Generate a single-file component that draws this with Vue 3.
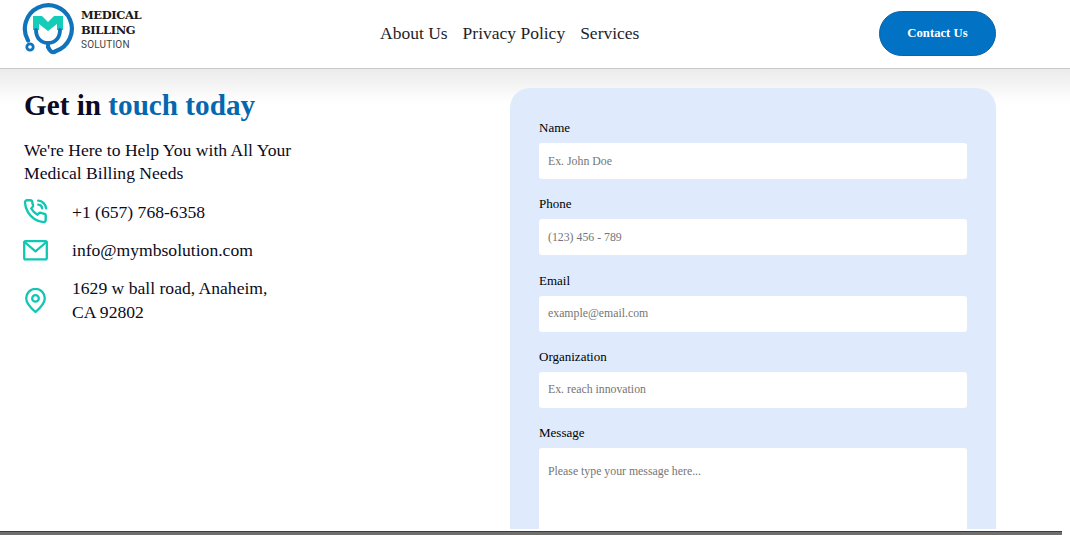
<script setup>
const contacts = [
  { id: 'phone', lines: ['+1 (657) 768-6358'] },
  { id: 'mail', lines: ['info@mymbsolution.com'] },
  { id: 'pin', lines: ['1629 w ball road, Anaheim,', 'CA 92802'] },
]

const fields = [
  { label: 'Name', placeholder: 'Ex. John Doe' },
  { label: 'Phone', placeholder: '(123) 456 - 789' },
  { label: 'Email', placeholder: 'example@email.com' },
  { label: 'Organization', placeholder: 'Ex. reach innovation' },
]
</script>

<template>
  <div class="page">
    <header class="topbar">
      <a class="brand" href="#">
        <svg class="logo" viewBox="0 0 56 56" width="56" height="56" aria-hidden="true">
          <path d="M9 39.5 A23.5 23.5 0 1 1 37 50 C33 53 31 50 29 46" fill="none" stroke="#0f74bb" stroke-width="4.2" stroke-linecap="round" />
          <circle cx="11" cy="46" r="3.2" fill="#fff" stroke="#0f74bb" stroke-width="2.8" />
          <path d="M14 15 H23 L29 21 L35 15 H44 V29 H38 V23 L29 30 L20 23 V29 H14 Z" fill="#14cdb8" />
          <path d="M17 29 C17 37 22 42 29 42 C36 42 41 37 41 29" fill="none" stroke="#0f74bb" stroke-width="3.8" stroke-linecap="round" />
          <path d="M29 42 V47" fill="none" stroke="#0f74bb" stroke-width="3.8" />
        </svg>
        <span class="brand-text">
          <b>MEDICAL</b>
          <b>BILLING</b>
          <small>SOLUTION</small>
        </span>
      </a>
      <nav class="nav">
        <a href="#">About Us</a>
        <a href="#">Privacy Policy</a>
        <a href="#">Services</a>
      </nav>
      <button class="cta" type="button">Contact Us</button>
    </header>

    <main class="content">
      <section class="info">
        <h1>Get in <span>touch today</span></h1>
        <p class="lead">We're Here to Help You with All Your<br />Medical Billing Needs</p>
        <ul class="contacts">
          <li v-for="c in contacts" :key="c.id">
            <svg v-if="c.id === 'phone'" class="ico" viewBox="0 0 24 24" width="25" height="25" aria-hidden="true">
              <path d="M14.6 1.6a8 8 0 0 1 7.6 7.4M14.7 5.4a4 4 0 0 1 3.7 3.6M21.8 17.2v3a2 2 0 0 1-2.2 2 19.8 19.8 0 0 1-8.6-3.1 19.5 19.5 0 0 1-6-6A19.8 19.8 0 0 1 1.9 3.4 2 2 0 0 1 3.9 1.2h3a2 2 0 0 1 2 1.7c.1 1 .4 1.9.7 2.8a2 2 0 0 1-.5 2.1L7.9 9.1a16 16 0 0 0 6 6l1.3-1.3a2 2 0 0 1 2.1-.4c.9.3 1.8.6 2.8.7a2 2 0 0 1 1.7 2.1z" />
            </svg>
            <svg v-else-if="c.id === 'mail'" class="ico" viewBox="0 0 25 21" width="25" height="21" aria-hidden="true">
              <rect x="1.2" y="1.2" width="22.6" height="18.2" rx="1.4" />
              <path d="M1.6 2 L12.5 11.4 L23.4 2" />
            </svg>
            <svg v-else class="ico" viewBox="0 0 25 25" width="25" height="25" aria-hidden="true">
              <path d="M12.5 24 C7.4 19.6 3.2 15.4 3.2 10.2 a9.3 9.3 0 0 1 18.6 0 C21.8 15.4 17.6 19.6 12.5 24z" />
              <circle cx="12.5" cy="10.4" r="3.3" />
            </svg>
            <span class="contact-text">
              <template v-for="(line, i) in c.lines" :key="i">{{ line }}<br v-if="i < c.lines.length - 1" /></template>
            </span>
          </li>
        </ul>
      </section>

      <form class="card" @submit.prevent>
        <div v-for="f in fields" :key="f.label" class="field">
          <label>{{ f.label }}</label>
          <input type="text" :placeholder="f.placeholder" />
        </div>
        <div class="field">
          <label>Message</label>
          <textarea placeholder="Please type your message here..."></textarea>
        </div>
      </form>
    </main>

    <div class="bottom-strip"></div>
  </div>
</template>

<style>
html,
body {
  margin: 0;
  overflow: hidden;
  background: #fff;
}
</style>

<style scoped>
.page {
  width: 1070px;
  height: 535px;
  display: flex;
  flex-direction: column;
  overflow: hidden;
  font-family: "Liberation Serif", "Times New Roman", serif;
  color: #0b0b1c;
  background: #fff;
}

.topbar {
  flex: none;
  height: 68px;
  display: flex;
  align-items: center;
  padding-left: 19px;
  background: #fff;
  border-bottom: 1px solid #c9c9c9;
}

.brand {
  display: flex;
  align-items: center;
  gap: 6px;
  width: 361px;
  margin-top: -10px;
  text-decoration: none;
  color: #1a1a1a;
}

.logo {
  flex: none;
}

.brand-text {
  display: flex;
  flex-direction: column;
  margin-top: 2px;
  font-family: "DejaVu Serif", serif;
  font-size: 11.5px;
  line-height: 15px;
  letter-spacing: -0.4px;
}

.brand-text small {
  font-family: "Roboto", sans-serif;
  font-size: 10px;
  line-height: 14px;
  letter-spacing: 0.2px;
  color: #444;
}

.nav {
  display: flex;
  gap: 15px;
  width: 499px;
  margin-top: -1px;
  font-size: 17.5px;
}

.nav a {
  color: #1e1e2a;
  text-decoration: none;
}

.cta {
  width: 117px;
  height: 45px;
  margin-top: -1px;
  padding: 0;
  border: 1px solid #0b62a8;
  border-radius: 23px;
  background: #0272c4;
  color: #fff;
  font-family: inherit;
  font-size: 12.7px;
  font-weight: 700;
}

.content {
  flex: none;
  height: 460px;
  display: flex;
  padding-left: 24px;
  background: linear-gradient(#ebebeb 0, #fff 34px);
}

.info {
  width: 486px;
  flex: none;
}

h1 {
  margin: 18px 0 0;
  font-size: 29.2px;
  line-height: 36px;
  font-weight: 700;
  color: #0d0a26;
}

h1 span {
  color: #0568ae;
}

.lead {
  margin: 16px 0 0;
  font-size: 17.6px;
  line-height: 23px;
}

.contacts {
  list-style: none;
  margin: 14px 0 0;
  padding: 0;
  display: flex;
  flex-direction: column;
  gap: 14px;
}

.contacts li {
  display: flex;
  align-items: center;
  gap: 24px;
}

.ico {
  flex: none;
  width: 25px;
  margin-left: -1px;
  fill: none;
  stroke: #12c6b4;
  stroke-width: 2.3;
  stroke-linecap: round;
  stroke-linejoin: round;
}

.contact-text {
  font-size: 17.6px;
  line-height: 24px;
}

.card {
  flex: none;
  width: 486px;
  box-sizing: border-box;
  margin-top: 19px;
  padding: 32px 29px 0;
  background: #dfebfd;
  border-radius: 20px 20px 0 0;
  display: flex;
  flex-direction: column;
  gap: 17.25px;
}

.field {
  display: flex;
  flex-direction: column;
  gap: 8px;
}

label {
  font-size: 13px;
  line-height: 15px;
  color: #000;
}

input,
textarea {
  width: 100%;
  box-sizing: border-box;
  border: 0;
  border-radius: 3px;
  background: #fff;
  padding: 0 9px;
  font-family: inherit;
  font-size: 11.8px;
  outline: none;
}

input {
  height: 36px;
}

textarea {
  height: 100px;
  padding-top: 16px;
  resize: none;
}

input::placeholder,
textarea::placeholder {
  color: #757575;
  opacity: 1;
}

.bottom-strip {
  flex: none;
  width: 1062px;
  height: 4px;
  margin-top: 2px;
  background: #6f6f6f;
  border-top: 1px solid #3c3c3c;
  box-sizing: border-box;
}
</style>
